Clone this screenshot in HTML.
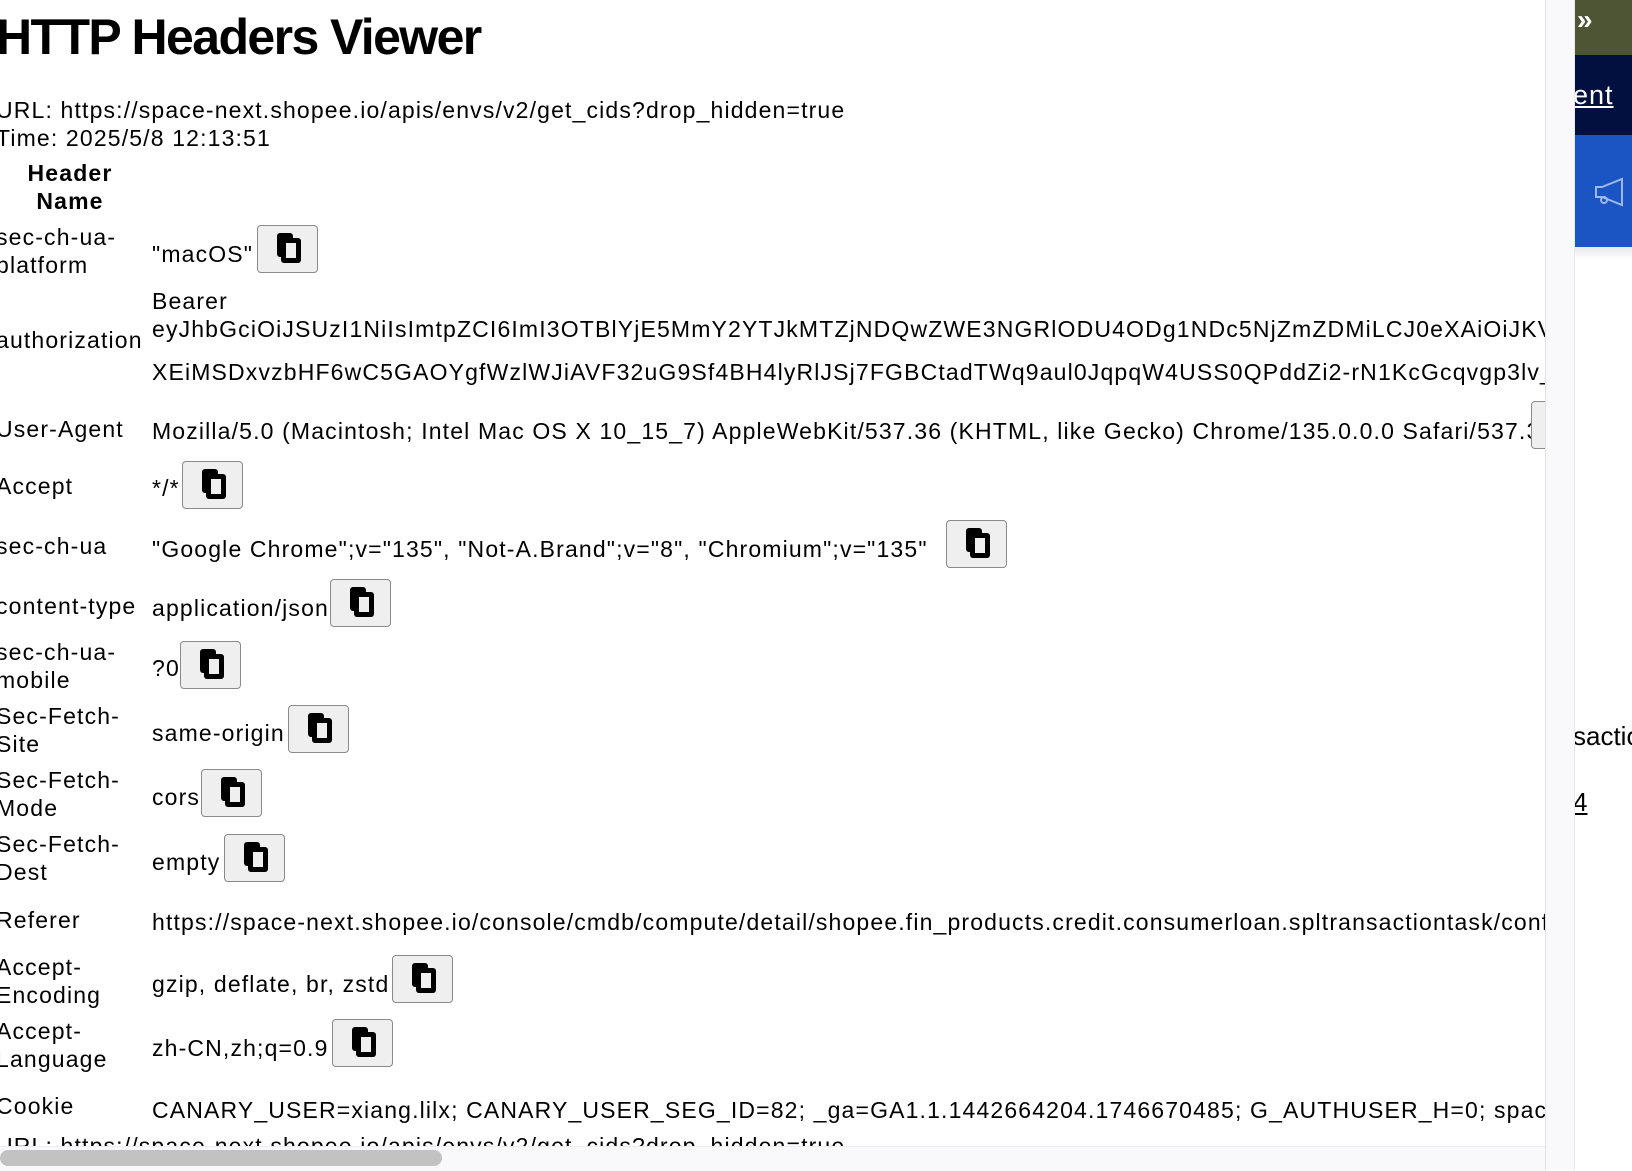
<!DOCTYPE html>
<html><head><meta charset="utf-8"><style>
html,body{margin:0;padding:0;width:1632px;height:1170px;overflow:hidden;background:#fff;font-family:"Liberation Sans",sans-serif;color:#000}
.c{position:absolute;left:0;top:0;width:1545px;height:1146px;overflow:hidden}
.t{position:absolute;font-size:23px;line-height:28px;white-space:nowrap;letter-spacing:1.15px}
.h{position:absolute;left:-4px;top:8px;font-size:50px;font-weight:bold;letter-spacing:-1.6px;white-space:nowrap}
.b{position:absolute;width:61px;height:48px;background:#efefef;border:1.5px solid #8a8a8a;border-radius:4px;box-sizing:border-box}
.b svg{position:absolute;left:15px;top:6px}
.sb{position:absolute;left:1545px;top:0;width:30px;height:1170px;background:#f9f8fb;border-left:1px solid #e2e2e2;border-right:1px solid #e8e8e8;box-sizing:border-box}
.hs{position:absolute;left:0;top:1146px;width:1545px;height:24px;background:#f9f8fb;border-top:1px solid #eee}
.th{position:absolute;left:0;top:1150px;width:442px;height:16px;background:#c2c2c2;border-radius:8px}
</style></head><body>
<div class="c">
<div class="h">HTTP Headers Viewer</div>
<div class="t" style="left:-4px;top:96px">URL: https://space-next.shopee.io/apis/envs/v2/get_cids?drop_hidden=true</div>
<div class="t" style="left:-4px;top:124px">Time: 2025/5/8 12:13:51</div>
<div class="t" style="left:15px;top:159px;width:110px;text-align:center;font-weight:bold;white-space:normal">Header Name</div>

<div class="t" style="left:-4px;top:223px">sec-ch-ua-<br>platform</div>
<div class="t" style="left:152px;top:240px">"macOS"</div>

<div class="t" style="left:-4px;top:326px">authorization</div>
<div class="t" style="left:152px;top:287px">Bearer</div>
<div class="t" style="left:152px;top:315px">eyJhbGciOiJSUzI1NiIsImtpZCI6ImI3OTBlYjE5MmY2YTJkMTZjNDQwZWE3NGRlODU4ODg1NDc5NjZmZDMiLCJ0eXAiOiJKV1QifQ</div>
<div class="t" style="left:152px;top:358px">XEiMSDxvzbHF6wC5GAOYgfWzlWJiAVF32uG9Sf4BH4lyRlJSj7FGBCtadTWq9aul0JqpqW4USS0QPddZi2-rN1KcGcqvgp3lv_abc</div>

<div class="t" style="left:-4px;top:415px">User-Agent</div>
<div class="t" style="left:152px;top:417px">Mozilla/5.0 (Macintosh; Intel Mac OS X 10_15_7) AppleWebKit/537.36 (KHTML, like Gecko) Chrome/135.0.0.0 Safari/537.36</div>

<div class="t" style="left:-4px;top:472px">Accept</div>
<div class="t" style="left:152px;top:474px">*/*</div>

<div class="t" style="left:-4px;top:532px">sec-ch-ua</div>
<div class="t" style="left:152px;top:535px">"Google Chrome";v="135", "Not-A.Brand";v="8", "Chromium";v="135"</div>

<div class="t" style="left:-4px;top:592px">content-type</div>
<div class="t" style="left:152px;top:594px">application/json</div>

<div class="t" style="left:-4px;top:638px">sec-ch-ua-<br>mobile</div>
<div class="t" style="left:152px;top:654px">?0</div>

<div class="t" style="left:-4px;top:702px">Sec-Fetch-<br>Site</div>
<div class="t" style="left:152px;top:719px">same-origin</div>

<div class="t" style="left:-4px;top:766px">Sec-Fetch-<br>Mode</div>
<div class="t" style="left:152px;top:783px">cors</div>

<div class="t" style="left:-4px;top:830px">Sec-Fetch-<br>Dest</div>
<div class="t" style="left:152px;top:848px">empty</div>

<div class="t" style="left:-4px;top:906px">Referer</div>
<div class="t" style="left:152px;top:908px">https://space-next.shopee.io/console/cmdb/compute/detail/shopee.fin_products.credit.consumerloan.spltransactiontask/config</div>

<div class="t" style="left:-4px;top:953px">Accept-<br>Encoding</div>
<div class="t" style="left:152px;top:970px">gzip, deflate, br, zstd</div>

<div class="t" style="left:-4px;top:1017px">Accept-<br>Language</div>
<div class="t" style="left:152px;top:1034px">zh-CN,zh;q=0.9</div>

<div class="t" style="left:-4px;top:1092px">Cookie</div>
<div class="t" style="left:152px;top:1096px">CANARY_USER=xiang.lilx; CANARY_USER_SEG_ID=82; _ga=GA1.1.1442664204.1746670485; G_AUTHUSER_H=0; space_auth=1</div>
<div class="t" style="left:-4px;top:1132px">URL: https://space-next.shopee.io/apis/envs/v2/get_cids?drop_hidden=true</div>

<div class="b" style="left:257px;top:225px"><svg width="32" height="34" viewBox="0 0 32 34"><rect x="4" y="1" width="16" height="24" rx="3" fill="#000"/><rect x="8" y="6" width="20" height="25" rx="3" fill="#000"/><rect x="13" y="11" width="10" height="15" fill="#efefef"/></svg></div>
<div class="b" style="left:1531px;top:401px"></div>
<div class="b" style="left:182px;top:461px"><svg width="32" height="34" viewBox="0 0 32 34"><rect x="4" y="1" width="16" height="24" rx="3" fill="#000"/><rect x="8" y="6" width="20" height="25" rx="3" fill="#000"/><rect x="13" y="11" width="10" height="15" fill="#efefef"/></svg></div>
<div class="b" style="left:946px;top:520px"><svg width="32" height="34" viewBox="0 0 32 34"><rect x="4" y="1" width="16" height="24" rx="3" fill="#000"/><rect x="8" y="6" width="20" height="25" rx="3" fill="#000"/><rect x="13" y="11" width="10" height="15" fill="#efefef"/></svg></div>
<div class="b" style="left:330px;top:579px"><svg width="32" height="34" viewBox="0 0 32 34"><rect x="4" y="1" width="16" height="24" rx="3" fill="#000"/><rect x="8" y="6" width="20" height="25" rx="3" fill="#000"/><rect x="13" y="11" width="10" height="15" fill="#efefef"/></svg></div>
<div class="b" style="left:180px;top:641px"><svg width="32" height="34" viewBox="0 0 32 34"><rect x="4" y="1" width="16" height="24" rx="3" fill="#000"/><rect x="8" y="6" width="20" height="25" rx="3" fill="#000"/><rect x="13" y="11" width="10" height="15" fill="#efefef"/></svg></div>
<div class="b" style="left:288px;top:705px"><svg width="32" height="34" viewBox="0 0 32 34"><rect x="4" y="1" width="16" height="24" rx="3" fill="#000"/><rect x="8" y="6" width="20" height="25" rx="3" fill="#000"/><rect x="13" y="11" width="10" height="15" fill="#efefef"/></svg></div>
<div class="b" style="left:201px;top:769px"><svg width="32" height="34" viewBox="0 0 32 34"><rect x="4" y="1" width="16" height="24" rx="3" fill="#000"/><rect x="8" y="6" width="20" height="25" rx="3" fill="#000"/><rect x="13" y="11" width="10" height="15" fill="#efefef"/></svg></div>
<div class="b" style="left:224px;top:834px"><svg width="32" height="34" viewBox="0 0 32 34"><rect x="4" y="1" width="16" height="24" rx="3" fill="#000"/><rect x="8" y="6" width="20" height="25" rx="3" fill="#000"/><rect x="13" y="11" width="10" height="15" fill="#efefef"/></svg></div>
<div class="b" style="left:392px;top:955px"><svg width="32" height="34" viewBox="0 0 32 34"><rect x="4" y="1" width="16" height="24" rx="3" fill="#000"/><rect x="8" y="6" width="20" height="25" rx="3" fill="#000"/><rect x="13" y="11" width="10" height="15" fill="#efefef"/></svg></div>
<div class="b" style="left:332px;top:1019px"><svg width="32" height="34" viewBox="0 0 32 34"><rect x="4" y="1" width="16" height="24" rx="3" fill="#000"/><rect x="8" y="6" width="20" height="25" rx="3" fill="#000"/><rect x="13" y="11" width="10" height="15" fill="#efefef"/></svg></div>
</div>
<div class="hs"></div><div class="th"></div>

<div style="position:absolute;left:1575px;top:0;width:57px;height:1170px;background:#fff;overflow:hidden">
  <div style="position:absolute;left:0;top:0;width:57px;height:55px;background:#4e5535"></div>
  <div style="position:absolute;left:2px;top:2px;color:#fff;font-size:28px;font-weight:bold;line-height:36px">&raquo;</div>
  <div style="position:absolute;left:0;top:55px;width:57px;height:80px;background:#01103f"></div>
  <div style="position:absolute;left:-2px;top:78px;color:#fff;font-size:27px;line-height:34px;text-decoration:underline;letter-spacing:1px">ent</div>
  <div style="position:absolute;left:0;top:135px;width:57px;height:112px;background:#1a55c3"></div>
  <svg style="position:absolute;left:19px;top:175px" width="32" height="34" viewBox="0 0 32 34"><path d="M2 12 L2 22 L8 22 L28 30 L28 4 L8 12 Z" fill="none" stroke="#9fb8ea" stroke-width="2"/><circle cx="10" cy="25" r="3" fill="none" stroke="#9fb8ea" stroke-width="2"/></svg>
  <div style="position:absolute;left:0;top:247px;width:57px;height:12px;background:linear-gradient(#e8e8ec,#fff)"></div>
  <div style="position:absolute;left:-2px;top:720px;font-size:26px;line-height:32px;white-space:nowrap">saction</div>
  <div style="position:absolute;left:-2px;top:786px;font-size:26px;line-height:32px;text-decoration:underline">4</div>
</div>
<div class="sb"></div>
</body></html>
